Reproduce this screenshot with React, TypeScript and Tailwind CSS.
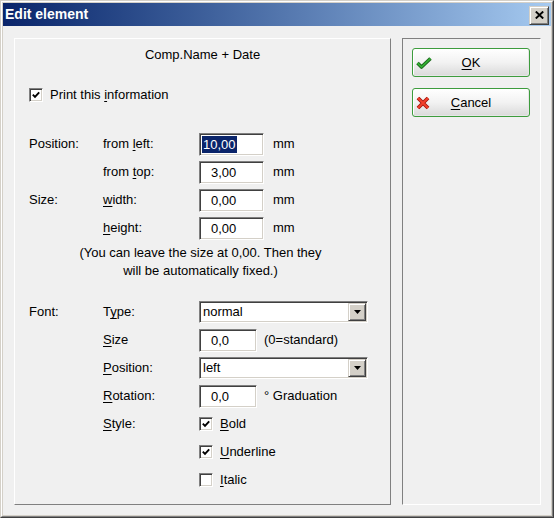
import React from "react";

const U = ({ children }: { children: React.ReactNode }) => <span className="underline underline-offset-[2px]">{children}</span>;

function Field({ value, width, selected }: { value: string; width: string; selected?: boolean }) {
  return (
    <div
      className={`flex h-[23px] ${width} items-center border border-t-[#808080] border-l-[#808080] border-b-white border-r-white bg-white shadow-[inset_1px_1px_0_#404040,inset_-1px_-1px_0_#d4d0c8]`}
    >
      {selected ? (
        <span className="ml-[2px] bg-[#0a246a] px-[1px] leading-[17px] text-white">{value}</span>
      ) : (
        <span className="pl-[11px] leading-[17px]">{value}</span>
      )}
    </div>
  );
}

function Select({ value }: { value: string }) {
  return (
    <div className="flex h-[22px] w-[169px] items-center border border-t-[#808080] border-l-[#808080] border-b-white border-r-white bg-white shadow-[inset_1px_1px_0_#404040,inset_-1px_-1px_0_#d4d0c8]">
      <span className="flex-1 pl-[3px] leading-[16px]">{value}</span>
      <div className="mr-[1px] flex h-[18px] w-[18px] items-center justify-center border border-t-[#d4d0c8] border-l-[#d4d0c8] border-b-[#404040] border-r-[#404040] bg-[#d4d0c8] shadow-[inset_1px_1px_0_#fff,inset_-1px_-1px_0_#808080]">
        <svg width="7" height="4" viewBox="0 0 7 4">
          <path d="M0 0h7L3.5 4z" fill="#000" />
        </svg>
      </div>
    </div>
  );
}

function Check({ checked }: { checked?: boolean }) {
  return (
    <div className="flex h-[14px] w-[14px] items-center justify-center border border-t-[#808080] border-l-[#808080] border-b-white border-r-white bg-white shadow-[inset_1px_1px_0_#404040,inset_-1px_-1px_0_#d4d0c8]">
      {checked && (
        <svg width="8" height="8" viewBox="0 0 8 8">
          <path d="M0.8 3.6 L3 5.9 L7.2 1.4" fill="none" stroke="#000" strokeWidth="1.9" />
        </svg>
      )}
    </div>
  );
}

function Row({ a, b, children }: { a?: React.ReactNode; b?: React.ReactNode; children?: React.ReactNode }) {
  return (
    <div className="flex h-[28px] items-center">
      <div className="w-[74px]">{a}</div>
      <div className="w-[96px]">{b}</div>
      {children}
    </div>
  );
}

function DlgButton({ icon, children }: { icon: React.ReactNode; children: React.ReactNode }) {
  return (
    <div className="relative flex h-[29px] w-[118px] items-center justify-center rounded-[3px] border border-[#3d9c3d] bg-gradient-to-b from-white via-[#f2f2f2] to-[#d9d9d9] shadow-[inset_1px_1px_0_#fff,inset_-1px_-1px_0_#e6e6e6]">
      <span className="absolute left-[3px] top-1/2 flex -translate-y-1/2">{icon}</span>
      <span>{children}</span>
    </div>
  );
}

export default function App() {
  return (
    <div className="h-[518px] w-[554px] border border-t-[#d4d0c8] border-l-[#d4d0c8] border-b-[#404040] border-r-[#404040] font-['Liberation_Sans',Arial,sans-serif] text-[13px] text-black">
      <div className="h-full w-full border border-t-white border-l-white border-b-[#808080] border-r-[#808080]">
        <div className="flex h-full w-full flex-col bg-[#d4d0c8] p-px">
          <div className="flex h-[23px] items-center bg-gradient-to-r from-[#0a246a] to-[#a6caf0] pl-[2px]">
            <span className="flex-1 text-[14px] font-bold text-white">Edit element</span>
            <div className="mr-[2px] mt-[1px] flex h-[19px] w-[20px] items-center justify-center border border-t-[#d4d0c8] border-l-[#d4d0c8] border-b-[#404040] border-r-[#404040] bg-[#d4d0c8] shadow-[inset_1px_1px_0_#fff,inset_-1px_-1px_0_#808080]">
              <svg width="9" height="8" viewBox="0 0 9 8">
                <path d="M0.8 0.5 L8.2 7.5 M8.2 0.5 L0.8 7.5" stroke="#000" strokeWidth="1.9" />
              </svg>
            </div>
          </div>
          <div className="flex flex-1 gap-[11px] bg-[#f0f0f0] pl-[11px] pt-[12px]">
            {/* left panel */}
            <div className="flex h-[467px] w-[377px] flex-col border border-t-white border-l-white border-b-[#808080] border-r-[#808080] pl-[14px] pt-[8px]">
              <div className="h-[16px] pr-[14px] text-center leading-[16px]">Comp.Name + Date</div>
              <div className="mt-[18px] flex h-[28px] items-center">
                <Check checked />
                <span className="ml-[7px]">
                  Print this <U>i</U>nformation
                </span>
              </div>
              <div className="mt-[21px]">
                <Row a="Position:" b={<>from <U>l</U>eft:</>}>
                  <Field value="10,00" width="w-[65px]" selected />
                  <span className="ml-[9px]">mm</span>
                </Row>
                <Row b={<>from <U>t</U>op:</>}>
                  <Field value="3,00" width="w-[65px]" />
                  <span className="ml-[9px]">mm</span>
                </Row>
                <Row a="Size:" b={<><U>w</U>idth:</>}>
                  <Field value="0,00" width="w-[65px]" />
                  <span className="ml-[9px]">mm</span>
                </Row>
                <Row b={<><U>h</U>eight:</>}>
                  <Field value="0,00" width="w-[65px]" />
                  <span className="ml-[9px]">mm</span>
                </Row>
              </div>
              <div className="mt-[2px] pr-[18px] text-center leading-[18px]">
                (You can leave the size at 0,00. Then they
                <br />
                will be automatically fixed.)
              </div>
              <div className="mt-[18px]">
                <Row a="Font:" b={<>T<U>y</U>pe:</>}>
                  <Select value="normal" />
                </Row>
                <Row b={<><U>S</U>ize</>}>
                  <Field value="0,0" width="w-[58px]" />
                  <span className="ml-[7px]">(0=standard)</span>
                </Row>
                <Row b={<><U>P</U>osition:</>}>
                  <Select value="left" />
                </Row>
                <Row b={<><U>R</U>otation:</>}>
                  <Field value="0,0" width="w-[58px]" />
                  <span className="ml-[7px]">° Graduation</span>
                </Row>
                <Row b={<><U>S</U>tyle:</>}>
                  <Check checked />
                  <span className="ml-[7px]">
                    <U>B</U>old
                  </span>
                </Row>
                <Row>
                  <Check checked />
                  <span className="ml-[7px]">
                    <U>U</U>nderline
                  </span>
                </Row>
                <Row>
                  <Check />
                  <span className="ml-[7px]">
                    <U>I</U>talic
                  </span>
                </Row>
              </div>
            </div>
            {/* right panel */}
            <div className="flex h-[467px] w-[139px] flex-col gap-[11px] border border-t-[#808080] border-l-[#808080] border-b-white border-r-white pl-[9px] pt-[9px]">
              <DlgButton
                icon={
                  <svg width="16" height="12" viewBox="0 0 16 12">
                    <path d="M1.5 6 L5.5 10 L14.5 1.5" fill="none" stroke="#1d6b1d" strokeWidth="3.6" strokeLinejoin="round" />
                    <path d="M1.5 6 L5.5 10 L14.5 1.5" fill="none" stroke="#35b535" strokeWidth="1.6" strokeLinejoin="round" />
                  </svg>
                }
              >
                <U>O</U>K
              </DlgButton>
              <DlgButton
                icon={
                  <svg width="14" height="13" viewBox="0 0 14 13">
                    <path d="M2 1.5 L12 11.5 M12 1.5 L2 11.5" stroke="#a3160c" strokeWidth="3.8" />
                    <path d="M2 1.5 L12 11.5 M12 1.5 L2 11.5" stroke="#f2402c" strokeWidth="2" />
                  </svg>
                }
              >
                <U>C</U>ancel
              </DlgButton>
            </div>
          </div>
        </div>
      </div>
    </div>
  );
}
